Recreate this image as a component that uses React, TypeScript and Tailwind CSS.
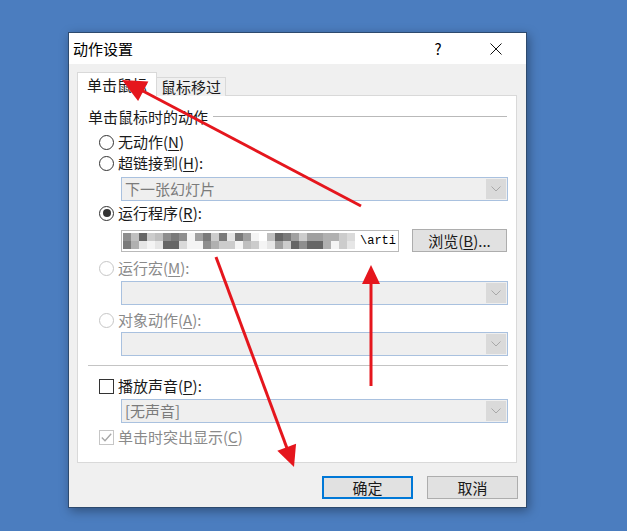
import React from 'react'

const cjk = "font-['Noto_Sans_CJK_SC','Noto_Sans',sans-serif]"

// pixelated blur in the program path field
const mosaic = (() => {
  const shades = ['#f4f4f4', '#e6e6e6', '#dadada', '#cccccc', '#bfbfbf', '#b0b0b0', '#a0a0a0', '#8e8e8e', '#7a7a7a', '#666666', '#ffffff']
  let s = 11
  const out: string[] = []
  for (let i = 0; i < 58; i++) {
    s = (s * 1103515245 + 12345) % 2147483648
    out.push(shades[Math.floor((s / 2147483648) * shades.length)])
  }
  return out
})()

const Acc = ({ label, k, colon }: { label: string; k: string; colon?: boolean }) => (
  <span>
    {label}(<span className="underline underline-offset-2">{k}</span>){colon ? ':' : ''}
  </span>
)

const Radio = ({ checked, disabled, children }: { checked?: boolean; disabled?: boolean; children: React.ReactNode }) => (
  <div className={`flex items-center h-5 pl-[21px] ${disabled ? 'text-[#8a8a8a]' : 'text-[#1a1a1a]'}`}>
    <span
      className={`w-[15px] h-[15px] rounded-full border flex items-center justify-center bg-white ${
        disabled ? 'border-[#c6c6c6]' : 'border-[#333333]'
      }`}
    >
      {checked && <span className="w-[8px] h-[8px] rounded-full bg-[#333333]" />}
    </span>
    <span className="ml-[4px]">{children}</span>
  </div>
)

const Combo = ({ text, className = '' }: { text?: string; className?: string }) => (
  <div className={`ml-[43px] mr-[8px] h-6 border border-[#a9c1df] bg-[#efefef] flex items-center ${className}`}>
    <span className="flex-1 pl-[3px] text-[#7b7b7b]">{text}</span>
    <span className="w-[20px] h-[20px] mr-[1px] bg-[#dadada] flex items-center justify-center">
      <svg width="10" height="6" viewBox="0 0 10 6">
        <path d="M0.5 0.5 L5 5 L9.5 0.5" fill="none" stroke="#a8a8a8" strokeWidth="1" />
      </svg>
    </span>
  </div>
)

const Arrow = ({ x1, y1, x2, y2, hl = 19, hw = 9 }: { x1: number; y1: number; x2: number; y2: number; hl?: number; hw?: number }) => {
  const len = Math.hypot(x2 - x1, y2 - y1)
  const ux = (x2 - x1) / len
  const uy = (y2 - y1) / len
  const bx = x2 - ux * hl
  const by = y2 - uy * hl
  const pts = `${x2},${y2} ${bx - uy * hw},${by + ux * hw} ${bx + uy * hw},${by - ux * hw}`
  return (
    <g>
      <line x1={x1} y1={y1} x2={bx + ux * 2} y2={by + uy * 2} stroke="#e5161d" strokeWidth="3" />
      <polygon points={pts} fill="#e5161d" />
    </g>
  )
}

const App = () => {
  return (
    <div className={`relative w-[627px] h-[531px] bg-[#4b7dbf] pl-[68px] pt-[32px] text-[15px] leading-5 ${cjk}`}>
      <div className="w-[459px] h-[476px] flex flex-col border border-[#2d4a6e] bg-[#f0f0f0] shadow-[2px_3px_10px_rgba(0,0,0,0.35)]">
        {/* title bar */}
        <div className="h-[31px] bg-white flex items-center">
          <span className="pl-[4px] flex-1 text-black">动作设置</span>
          <span className="w-[46px] text-center text-black">?</span>
          <span className="ml-[12px] mr-[7px] w-[46px] flex justify-center">
            <svg width="12" height="12" viewBox="0 0 12 12">
              <path d="M0.5 0.5 L11.5 11.5 M11.5 0.5 L0.5 11.5" stroke="#111" strokeWidth="1" />
            </svg>
          </span>
        </div>

        {/* body */}
        <div className="flex-1 flex flex-col pt-[8px]">
          <div className="flex items-end pl-[8px] h-[24px] relative z-10">
            <div className="h-[24px] w-[80px] bg-white border border-[#d9d9d9] border-b-0 flex items-center justify-center text-[#1a1a1a]">
              单击鼠标
            </div>
            <div className="h-[19px] w-[69px] bg-[#f0f0f0] border border-[#d9d9d9] border-l-0 border-b-0 flex items-center justify-center text-[#1a1a1a]">
              鼠标移过
            </div>
          </div>

          <div className="ml-[8px] mr-[9px] -mt-px h-[368px] bg-white border border-[#d9d9d9] flex flex-col text-[#1a1a1a]">
            <div className="mt-[11px] h-5 flex items-center pl-[10px] pr-[9px]">
              <span>单击鼠标时的动作</span>
              <span className="flex-1 ml-[5px] h-[2px] border-t border-[#b9b9b9] border-b border-b-white" />
            </div>

            <div className="mt-[5px]">
              <Radio>
                <Acc label="无动作" k="N" />
              </Radio>
            </div>
            <div className="mt-[1px]">
              <Radio>
                <Acc label="超链接到" k="H" colon />
              </Radio>
            </div>
            <Combo text="下一张幻灯片" className="mt-[4px]" />

            <div className="mt-[2px]">
              <Radio checked>
                <Acc label="运行程序" k="R" colon />
              </Radio>
            </div>
            <div className="mt-[6px] flex items-center pl-[43px] pr-[8px]">
              <div className="w-[278px] h-[22px] border border-[#b9b9b9] bg-white flex items-center pl-[1px] pr-[2px]">
                <div className="grid grid-cols-[repeat(29,8px)] grid-rows-[repeat(2,8px)] flex-1">
                  {mosaic.map((c, i) => (
                    <span key={i} style={{ backgroundColor: c }} />
                  ))}
                </div>
                <span className="font-['Liberation_Mono',monospace] text-[12px] leading-none text-black">\arti</span>
              </div>
              <button className="ml-[13px] w-[95px] h-[23px] bg-[#e1e1e1] border border-[#adadad] flex items-center justify-center text-[#1a1a1a]">
                <span>
                  浏览(<span className="underline underline-offset-2">B</span>)...
                </span>
              </button>
            </div>

            <div className="mt-[6px]">
              <Radio disabled>
                <Acc label="运行宏" k="M" colon />
              </Radio>
            </div>
            <Combo className="mt-[3px]" />

            <div className="mt-[5px]">
              <Radio disabled>
                <Acc label="对象动作" k="A" colon />
              </Radio>
            </div>
            <Combo className="mt-[2px]" />

            <div className="mt-[9px] mx-[10px] mr-[8px] h-[2px] border-t border-[#c4c4c4] border-b border-b-white" />

            <div className="mt-[9px] h-5 flex items-center pl-[21px]">
              <span className="w-[15px] h-[15px] border border-[#333333] bg-white" />
              <span className="ml-[4px]">
                <Acc label="播放声音" k="P" colon />
              </span>
            </div>
            <Combo text="[无声音]" className="mt-[3px]" />

            <div className="mt-[4px] h-5 flex items-center pl-[21px] text-[#8a8a8a]">
              <span className="w-[15px] h-[15px] border border-[#c6c6c6] bg-white flex items-center justify-center">
                <svg width="11" height="9" viewBox="0 0 11 9">
                  <path d="M0.8 4.5 L4 7.8 L10.2 0.8" fill="none" stroke="#a6a6a6" strokeWidth="1.3" />
                </svg>
              </span>
              <span className="ml-[4px]">
                <Acc label="单击时突出显示" k="C" />
              </span>
            </div>
          </div>

          <div className="mt-[13px] flex justify-end gap-[14px] pr-[8px]">
            <button className="w-[91px] h-[23px] bg-[#e1e1e1] border-2 border-[#0078d7] flex items-center justify-center text-[#1a1a1a]">
              确定
            </button>
            <button className="w-[91px] h-[23px] bg-[#e1e1e1] border border-[#adadad] flex items-center justify-center text-[#1a1a1a]">
              取消
            </button>
          </div>
        </div>
      </div>

      <svg className="absolute inset-0 z-20 pointer-events-none" width="627" height="531" viewBox="0 0 627 531">
        <Arrow x1={361} y1={206} x2={122} y2={80} hl={24} hw={11} />
        <Arrow x1={371} y1={386} x2={371} y2={265} hl={19} hw={9} />
        <Arrow x1={216} y1={257} x2={294} y2={467} hl={21} hw={10} />
      </svg>
    </div>
  )
}

export default App
